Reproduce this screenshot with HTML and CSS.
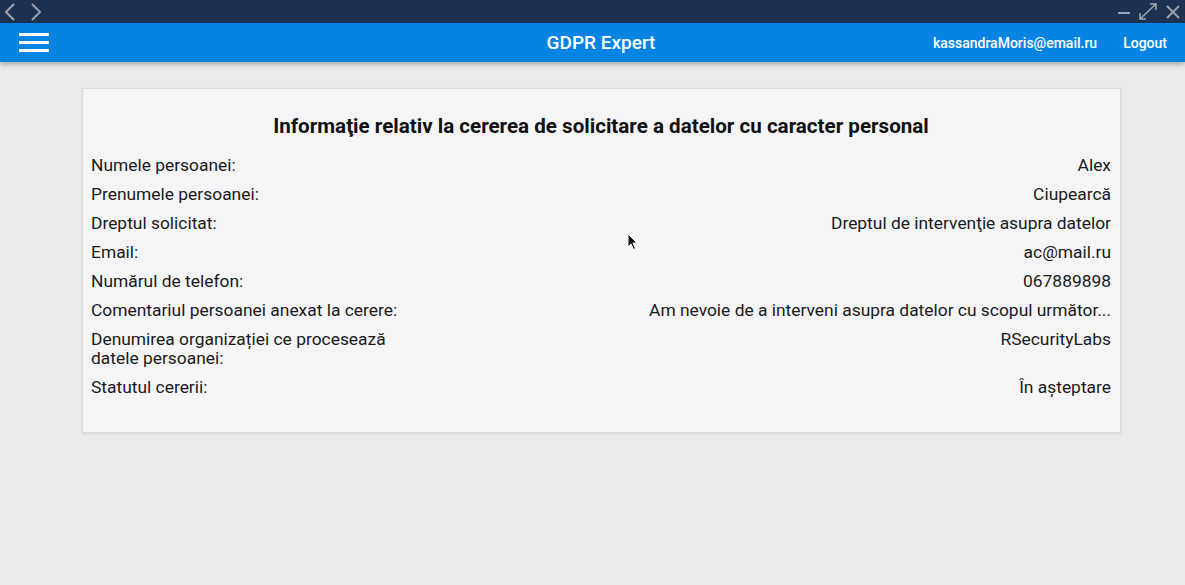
FILE: index.html
```html
<!DOCTYPE html>
<html lang="ro">
<head>
<meta charset="utf-8">
<title>GDPR Expert</title>
<link rel="stylesheet" href="styles.css">
</head>
<body>
<div class="titlebar">
  <div class="nav-arrows">
    <svg width="14" height="20" viewBox="0 0 14 20"><path d="M11 2 L3 10 L11 18" fill="none" stroke="#9aa3ad" stroke-width="2"/></svg>
    <svg width="14" height="20" viewBox="0 0 14 20"><path d="M3 2 L11 10 L3 18" fill="none" stroke="#9aa3ad" stroke-width="2"/></svg>
  </div>
  <div class="win-ctrls">
    <svg width="14" height="14" viewBox="0 0 14 14"><path d="M1 8 H13" stroke="#9aa3ad" stroke-width="2"/></svg>
    <svg width="20" height="18" viewBox="0 0 20 18"><path d="M2 16 L18 1 M12 1 H18 V7 M2 10 V16 H8" fill="none" stroke="#9aa3ad" stroke-width="1.6"/></svg>
    <svg width="16" height="16" viewBox="0 0 16 16"><path d="M2 2 L14 14 M14 2 L2 14" stroke="#9aa3ad" stroke-width="2"/></svg>
  </div>
</div>
<header class="appbar">
  <div class="menu-btn">
    <span></span><span></span><span></span>
  </div>
  <div class="app-title">GDPR Expert</div>
  <div class="user-area">
    <span class="user-email">kassandraMoris@email.ru</span>
    <span class="logout">Logout</span>
  </div>
</header>
<main class="content">
  <section class="card">
    <h1 class="card-title">Informaţie relativ la cererea de solicitare a datelor cu caracter personal</h1>
    <div class="row"><div class="label">Numele persoanei:</div><div class="value">Alex</div></div>
    <div class="row"><div class="label">Prenumele persoanei:</div><div class="value">Ciupearcă</div></div>
    <div class="row"><div class="label">Dreptul solicitat:</div><div class="value">Dreptul de intervenţie asupra datelor</div></div>
    <div class="row"><div class="label">Email:</div><div class="value">ac@mail.ru</div></div>
    <div class="row"><div class="label">Numărul de telefon:</div><div class="value">067889898</div></div>
    <div class="row"><div class="label">Comentariul persoanei anexat la cerere:</div><div class="value">Am nevoie de a interveni asupra datelor cu scopul următor...</div></div>
    <div class="row"><div class="label">Denumirea organizației ce procesează datele persoanei:</div><div class="value">RSecurityLabs</div></div>
    <div class="row"><div class="label">Statutul cererii:</div><div class="value">În așteptare</div></div>
  </section>
</main>
<svg class="cursor" width="12" height="18" viewBox="0 0 12 18"><path d="M1 1 V14 L4 11 L6.5 16.5 L8.5 15.5 L6 10 H10 Z" fill="#111" stroke="#fff" stroke-width="1"/></svg>
</body>
</html>
```

FILE: styles.css
```css
* { box-sizing: border-box; }
html, body { margin: 0; padding: 0; }
body {
  width: 1185px;
  height: 585px;
  overflow: hidden;
  background: #ebebeb;
  font-family: Roboto, "Noto Sans", "Liberation Sans", sans-serif;
  color: #1a1a1a;
  position: relative;
}
.titlebar {
  height: 23px;
  background: #1d3250;
  display: flex;
  justify-content: space-between;
  align-items: center;
  padding: 0 4px 0 3px;
}
.nav-arrows { display: flex; gap: 12px; align-items: center; }
.win-ctrls { display: flex; gap: 7px; align-items: center; }
.appbar {
  height: 39px;
  background: #0784e3;
  display: flex;
  align-items: center;
  padding: 0 18px 0 19px;
  position: relative;
  box-shadow: 0 3px 5px rgba(0,0,0,0.25);
  color: #fff;
}
.menu-btn {
  width: 30px;
  display: flex;
  flex-direction: column;
  gap: 5px;
}
.menu-btn span {
  display: block;
  height: 3px;
  background: #fff;
}
.app-title {
  position: absolute;
  left: 0; right: 0;
  text-align: center;
  font-size: 19px;
  font-weight: 500;
  pointer-events: none;
  padding-left: 17px;
}
.user-area {
  margin-left: auto;
  display: flex;
  gap: 26px;
  font-size: 14px;
  font-weight: 500;
  position: relative;
}
.content {
  padding: 26px 64px 0 82px;
}
.card {
  width: 1039px;
  background: #f5f5f7;
  border: 1px solid #dcdcdc;
  box-shadow: 0 1px 2px rgba(0,0,0,0.08);
  padding: 25px 9px 35px 8px;
}
.card-title {
  margin: 0 0 18px;
  text-align: center;
  font-size: 20.6px;
  font-weight: 700;
  line-height: 24px;
  color: #111;
}
.row {
  display: flex;
  justify-content: space-between;
  font-size: 17.4px;
  line-height: 19px;
  margin-bottom: 10px;
}
.row:last-child { margin-bottom: 0; }
.label { width: 320px; }
.value { text-align: right; }
.cursor {
  position: absolute;
  left: 627px;
  top: 233px;
}
```
